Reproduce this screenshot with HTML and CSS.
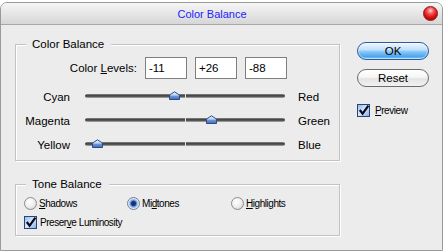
FILE: index.html
```html
<!DOCTYPE html>
<html>
<head>
<meta charset="utf-8">
<link rel="stylesheet" href="styles.css">
</head>
<body>
<div class="window">
  <div class="titlebar">
    <span class="title">Color Balance</span>
    <span class="close"></span>
  </div>
  <div class="body">
    <div class="main">
      <fieldset class="group group-balance">
        <legend>Color Balance</legend>
        <div class="levels">
          <span class="levels-label">Color <u>L</u>evels:</span>
          <input class="num" value="-11" readonly>
          <input class="num" value="+26" readonly>
          <input class="num" value="-88" readonly>
        </div>
        <div class="slider-row first">
          <span class="lbl-left">Cyan</span>
          <div class="track"><span class="tick"></span><span class="thumb" style="left:44.5%"><svg width="11" height="9" viewBox="0 0 11 9"><defs><linearGradient id="tg" x1="0" y1="0" x2="0" y2="1"><stop offset="0" stop-color="#f4f8ff"/><stop offset="0.45" stop-color="#b9cff0"/><stop offset="0.55" stop-color="#6f97d6"/><stop offset="1" stop-color="#3f6bb8"/></linearGradient></defs><path d="M0.5 8.5 V5 Q0.5 4 1.5 3.4 L5.5 0.8 L9.5 3.4 Q10.5 4 10.5 5 V8.5 Z" fill="url(#tg)" stroke="#2a4c88" stroke-width="1"/></svg></span></div>
          <span class="lbl-right">Red</span>
        </div>
        <div class="slider-row">
          <span class="lbl-left">Magenta</span>
          <div class="track"><span class="tick"></span><span class="thumb" style="left:63%"><svg width="11" height="9" viewBox="0 0 11 9"><path d="M0.5 8.5 V5 Q0.5 4 1.5 3.4 L5.5 0.8 L9.5 3.4 Q10.5 4 10.5 5 V8.5 Z" fill="url(#tg)" stroke="#2a4c88" stroke-width="1"/></svg></span></div>
          <span class="lbl-right">Green</span>
        </div>
        <div class="slider-row">
          <span class="lbl-left">Yellow</span>
          <div class="track"><span class="tick"></span><span class="thumb" style="left:6%"><svg width="11" height="9" viewBox="0 0 11 9"><path d="M0.5 8.5 V5 Q0.5 4 1.5 3.4 L5.5 0.8 L9.5 3.4 Q10.5 4 10.5 5 V8.5 Z" fill="url(#tg)" stroke="#2a4c88" stroke-width="1"/></svg></span></div>
          <span class="lbl-right">Blue</span>
        </div>
      </fieldset>
      <fieldset class="group group-tone">
        <legend>Tone Balance</legend>
        <div class="radios">
          <label class="radio r1"><span class="dot"></span><span class="small"><u>S</u>hadows</span></label>
          <label class="radio r2"><span class="dot on"></span><span class="small">Mi<u>d</u>tones</span></label>
          <label class="radio r3"><span class="dot"></span><span class="small"><u>H</u>ighlights</span></label>
        </div>
        <label class="check lum">
          <svg class="box" width="13" height="13" viewBox="0 0 13 13"><defs><linearGradient id="cg" x1="0" y1="0" x2="1" y2="1"><stop offset="0" stop-color="#8fb6ea"/><stop offset="0.5" stop-color="#d8e8fc"/><stop offset="1" stop-color="#7ea8e2"/></linearGradient></defs><rect x="0.5" y="0.5" width="12" height="12" fill="url(#cg)" stroke="#25457c"/><path d="M2.8 6 L5.6 9.6 L11.4 1.6" fill="none" stroke="#0a0a1a" stroke-width="2.2"/></svg>
          <span class="small">Preser<u>v</u>e Luminosity</span>
        </label>
      </fieldset>
    </div>
    <div class="side">
      <button class="btn btn-ok">OK</button>
      <button class="btn btn-reset">Reset</button>
      <label class="check preview">
        <svg class="box" width="13" height="13" viewBox="0 0 13 13"><rect x="0.5" y="0.5" width="12" height="12" fill="url(#cg)" stroke="#25457c"/><path d="M2.8 6 L5.6 9.6 L11.4 1.6" fill="none" stroke="#0a0a1a" stroke-width="2.2"/></svg>
        <span class="small"><u>P</u>review</span>
      </label>
    </div>
  </div>
</div>
</body>
</html>
```
FILE: styles.css
```css
* { box-sizing: border-box; }
html, body { margin: 0; padding: 0; }
body {
  background: #ffffff;
  font-family: "Liberation Sans", Arial, sans-serif;
  color: #000;
  padding-top: 2px;
  width: 443px;
  height: 252px;
  overflow: hidden;
}
.window {
  width: 443px;
  height: 249px;
  border: 1px solid #9a9a9a;
  border-radius: 7px 7px 0 0;
  background: #ececec;
  display: flex;
  flex-direction: column;
  overflow: hidden;
}
.titlebar {
  height: 22px;
  flex: none;
  display: flex;
  align-items: center;
  background: linear-gradient(#f6f6f6, #e6e6e6 50%, #d6d6d6);
  border-bottom: 1px solid #a8a8a8;
}
.title {
  flex: 1;
  text-align: center;
  color: #2222ff;
  font-size: 11px;
}
.close {
  width: 15px;
  height: 15px;
  border-radius: 50%;
  margin-right: 4px;
  border: 1px solid #8a1414;
  background: radial-gradient(circle at 50% 28%, #ffd0d0 0, #f25050 30%, #d81010 60%, #9a0000 100%);
}
.body {
  flex: 1;
  display: flex;
  padding-left: 14px;
}
.main { width: 325px; }
.side {
  margin-left: 17px;
  width: 72px;
  padding-top: 17px;
  display: flex;
  flex-direction: column;
}
.group {
  margin: 0;
  padding: 0;
  min-width: 0;
  border: 1px solid #c2c2c2;
  box-shadow: 1px 1px 0 #fff, inset 1px 1px 0 #fff;
}
.group legend {
  margin-left: 10px;
  padding: 0 7px 0 6px;
  font-size: 11.5px;
  line-height: 14px;
  background: #ececec;
}
.group-balance { margin-top: 12px; padding: 6px 0 3px; }
.group-tone { margin-top: 16px; padding: 4px 0 5px; }

.levels {
  display: flex;
  align-items: center;
  height: 22px;
  font-size: 11.5px;
}
.levels-label {
  width: 121px;
  text-align: right;
  margin-right: 8px;
}
.num {
  width: 42px;
  height: 22px;
  margin: 0 8px 0 0;
  padding: 0 0 0 3px;
  border: 1px solid #7f7f7f;
  background: #fff;
  font-family: "Liberation Sans", Arial, sans-serif;
  font-size: 11.5px;
  color: #000;
  outline: none;
}
.slider-row {
  display: flex;
  align-items: center;
  height: 24px;
  font-size: 11.5px;
}
.slider-row.first { margin-top: 6px; }
.lbl-left { width: 54px; text-align: right; }
.lbl-right { margin-left: 13px; }
.track {
  position: relative;
  width: 200px;
  height: 4px;
  margin-left: 15px;
  margin-top: -2px;
  border-radius: 2px;
  background: linear-gradient(#8a8a8a, #444 40%, #5c5c5c 70%, #bcbcbc);
}
.tick {
  position: absolute;
  left: 50%;
  top: -1px;
  width: 1px;
  height: 6px;
  background: #e4e4e4;
}
.thumb {
  position: absolute;
  top: -3px;
  width: 11px;
  height: 9px;
  margin-left: -5.5px;
  display: block;
}
.thumb svg { display: block; }

.small {
  font-family: "Liberation Sans", Arial, sans-serif;
  font-size: 10px;
  letter-spacing: -0.45px;
}
.radios {
  display: flex;
  align-items: center;
  height: 16px;
  padding-left: 8px;
}
.radio {
  display: flex;
  align-items: center;
  gap: 2px;
}
.r1 { width: 103px; }
.r2 { width: 104px; }
.dot {
  width: 13px;
  height: 13px;
  border-radius: 50%;
  border: 1px solid #8c8c8c;
  background: radial-gradient(circle at 40% 35%, #ffffff 0, #eeeeee 50%, #c8c8c8 100%);
}
.dot.on {
  border-color: #6a7f9c;
  background: radial-gradient(circle at 50% 50%, #0a2a6e 0, #1b3f8c 2.2px, #7ea6dc 3.4px, #dce8f6 5px, #f4f4f4 6px);
}
.check {
  display: flex;
  align-items: center;
  gap: 3px;
  height: 16px;
}
.check .box { display: block; flex: none; }
.lum { margin-top: 3px; padding-left: 8px; }
.preview { margin-top: 15px; gap: 5px; }

.btn {
  width: 72px;
  height: 18px;
  padding: 0;
  border-radius: 9px;
  font-family: "Liberation Sans", Arial, sans-serif;
  font-size: 11.5px;
  color: #000;
  line-height: 16px;
}
.btn-ok {
  border: 1px solid #2b5aa0;
  background: linear-gradient(#eef7ff 0%, #c2e0fa 42%, #86c6f5 55%, #4aa6ee 85%, #8ccfff 100%);
  box-shadow: inset 0 0 0 1px rgba(255,255,255,0.45);
}
.btn-reset {
  margin-top: 9px;
  border: 1px solid #6c6c6c;
  background: linear-gradient(#ffffff, #f6f6f6 45%, #e4e4e4 55%, #f2f2f2);
}
```
